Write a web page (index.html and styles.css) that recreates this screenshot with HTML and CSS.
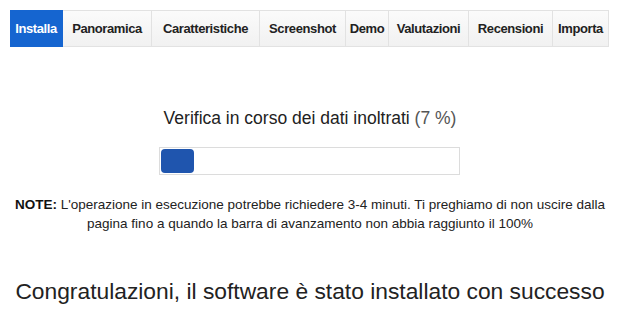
FILE: index.html
```html
<!DOCTYPE html>
<html lang="it">
<head>
    <meta charset="UTF-8">
    <title>Installa</title>
    <link rel="stylesheet" href="styles.css">
</head>
<body>
    <div class="tabs">
        <a href="#" class="tab active">Installa</a>
        <a href="#" class="tab">Panoramica</a>
        <a href="#" class="tab">Caratteristiche</a>
        <a href="#" class="tab">Screenshot</a>
        <a href="#" class="tab">Demo</a>
        <a href="#" class="tab">Valutazioni</a>
        <a href="#" class="tab">Recensioni</a>
        <a href="#" class="tab">Importa</a>
    </div>

    <div class="install">
        <h2 class="status">Verifica in corso dei dati inoltrati <span class="percent">(7 %)</span></h2>
        <div class="progress">
            <div class="progress-fill" style="width: 11%;"></div>
        </div>
        <p class="note"><strong>NOTE:</strong> L'operazione in esecuzione potrebbe richiedere 3-4 minuti. Ti preghiamo di non uscire dalla pagina fino a quando la barra di avanzamento non abbia raggiunto il 100%</p>
        <h1 class="done">Congratulazioni, il software è stato installato con successo</h1>
    </div>
</body>
</html>
```

FILE: styles.css
```css
* {
    margin: 0;
    padding: 0;
    box-sizing: border-box;
}

body {
    font-family: 'Liberation Sans', Arial, sans-serif;
    background-color: white;
    color: #333;
    width: 620px;
}

.tabs {
    display: flex;
    margin: 10px 11px 0 10px;
    height: 37px;
}

.tab {
    display: flex;
    align-items: center;
    justify-content: center;
    flex: none;
    padding: 0 6px;
    font-size: 13px;
    font-weight: bold;
    letter-spacing: -0.4px;
    color: #222;
    text-decoration: none;
    background: linear-gradient(#fbfbfb, #f1f1f1);
    border: 1px solid #e2e2e2;
    border-left: none;
}

.tab:nth-child(2) { width: 89px; }
.tab:nth-child(3) { width: 108px; }
.tab:nth-child(4) { width: 86px; }
.tab:nth-child(5) { width: 43px; }
.tab:nth-child(6) { width: 80px; }
.tab:nth-child(7) { width: 84px; }
.tab:nth-child(8) { width: 56px; }

.tab.active {
    width: 53px;
    background: #1565d0;
    border-color: #1565d0;
    color: white;
}

.install {
    text-align: center;
    padding-top: 60px;
}

.status {
    font-size: 17.5px;
    font-weight: normal;
    color: #222;
    line-height: 22px;
}

.percent {
    color: #555;
}

.progress {
    width: 301px;
    height: 28px;
    margin: 18px 0 0 159px;
    border: 1px solid #dcdcdc;
    background: white;
    padding: 1px;
}

.progress-fill {
    height: 100%;
    background: #1f55ae;
    border-radius: 4px;
}

.note {
    margin-top: 20px;
    font-size: 13.5px;
    line-height: 19px;
    color: #222;
    padding: 0 4px;
}

.note strong {
    color: #111;
}

.done {
    margin-top: 44px;
    font-size: 22.8px;
    font-weight: normal;
    color: #222;
    line-height: 28px;
}
```
